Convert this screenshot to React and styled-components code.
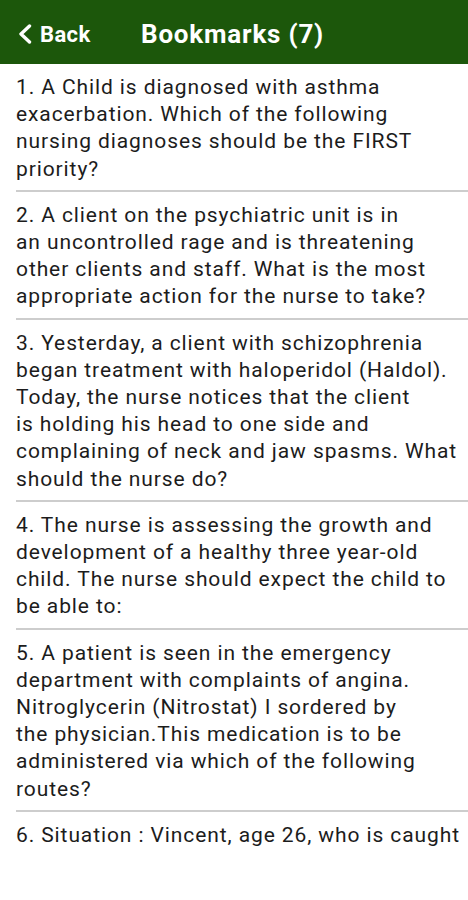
import React from "react"
import styled, { createGlobalStyle } from "styled-components"

const GlobalStyle = createGlobalStyle`
  body {
    margin: 0;
    background: #ffffff;
    font-family: Roboto, "Noto Sans", sans-serif;
  }
`

const questions = [
  [
    "1. A Child is diagnosed with asthma",
    "exacerbation. Which of the following",
    "nursing diagnoses should be the FIRST",
    "priority?",
  ],
  [
    "2. A client on the psychiatric unit is in",
    "an uncontrolled rage and is threatening",
    "other clients and staff. What is the most",
    "appropriate action for the nurse to take?",
  ],
  [
    "3. Yesterday, a client with schizophrenia",
    "began treatment with haloperidol (Haldol).",
    "Today, the nurse notices that the client",
    "is holding his head to one side and",
    "complaining of neck and jaw spasms. What",
    "should the nurse do?",
  ],
  [
    "4. The nurse is assessing the growth and",
    "development of a healthy three year-old",
    "child. The nurse should expect the child to",
    "be able to:",
  ],
  [
    "5. A patient is seen in the emergency",
    "department with complaints of angina.",
    "Nitroglycerin (Nitrostat) I sordered by",
    "the physician.This medication is to be",
    "administered via which of the following",
    "routes?",
  ],
  ["6. Situation : Vincent, age 26, who is caught"],
]

const App = () => (
  <Page>
    <GlobalStyle />
    <Header>
      <BackButton>
        <svg width="16" height="20" viewBox="0 0 16 20">
          <path d="M12.5 2 L4 10 L12.5 18" fill="none" stroke="#fff" strokeWidth="3.4" strokeLinecap="round" strokeLinejoin="round" />
        </svg>
        <span>Back</span>
      </BackButton>
      <Title>Bookmarks (7)</Title>
    </Header>
    <List>
      {questions.map((lines, i) => (
        <Item key={i} last={i === questions.length - 1}>
          {lines.map(line => (
            <Line key={line}>{line}</Line>
          ))}
        </Item>
      ))}
    </List>
  </Page>
)

export default App

const Page = styled.div`
  width: 468px;
  height: 900px;
  overflow: hidden;
  background: #fff;
`

const Header = styled.div`
  height: 64px;
  box-sizing: border-box;
  padding-top: 4px;
  background: #1c570b;
  display: flex;
  align-items: center;
  color: #fff;
`

const BackButton = styled.div`
  display: flex;
  align-items: center;
  gap: 7px;
  padding-left: 17px;
  width: 141px;
  box-sizing: border-box;
  font-size: 22px;
  font-weight: 700;
  letter-spacing: 0.4px;
`

const Title = styled.h1`
  margin: 0;
  font-size: 26px;
  font-weight: 700;
  letter-spacing: 0.8px;
`

const List = styled.div`
  padding-left: 16px;
`

const Item = styled.div`
  padding: 10px 0 7px;
  font-size: 21px;
  line-height: 27.2px;
  letter-spacing: 0.9px;
  color: #1c1c1c;
  border-bottom: ${props => (props.last ? "none" : "2px solid #cdcdcd")};
`

const Line = styled.div`
  white-space: nowrap;
`
